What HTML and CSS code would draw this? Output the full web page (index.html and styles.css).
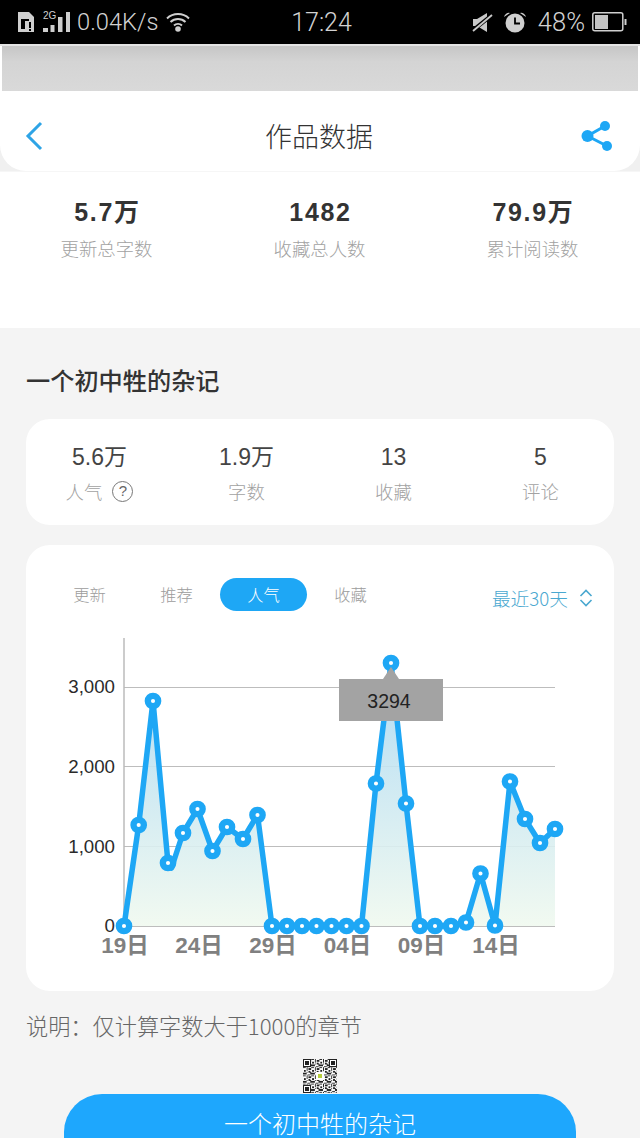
FILE: index.html
```html
<!DOCTYPE html>
<html lang="zh">
<head>
<meta charset="utf-8">
<title>作品数据</title>
<link rel="stylesheet" href="styles.css">
</head>
<body>
<div class="status">
  <div class="st-left">
    <svg class="ic-sim" viewBox="0 0 18 21"><path d="M1 0h11l5 5v15H1z" fill="#cfcfcf"/><path d="M4 7h8v10H4z" fill="#000"/><path d="M8 9h9v11H8z" fill="#cfcfcf"/><path d="M12 10h2v6h-2zM12 17h2v2h-2z" fill="#000"/></svg>
    <svg class="ic-sig" viewBox="0 0 28 22"><text x="0" y="8" class="g2">2G</text><rect x="0" y="17" width="5" height="4" fill="#cfcfcf"/><rect x="7.500" y="14" width="4" height="7" fill="#cfcfcf"/><rect x="15" y="6" width="4.500" height="15" fill="#cfcfcf"/><rect x="23" y="1" width="4" height="20" fill="#cfcfcf"/></svg>
    <span class="speed">0.04K/s</span>
    <svg class="ic-wifi" viewBox="0 0 24 20"><g fill="none" stroke="#cfcfcf" stroke-width="2"><path d="M1 6.500a16 16 0 0 1 22 0"/><path d="M4.500 10a11 11 0 0 1 15 0"/><path d="M8 13.500a6 6 0 0 1 8 0"/></g><circle cx="12" cy="17" r="2.800" fill="#cfcfcf"/></svg>
  </div>
  <div class="st-time">17:24</div>
  <div class="st-right">
    <svg class="ic-mute" viewBox="0 0 21 19"><path d="M1 6h4l10-6v19L5 13H1z" fill="#c8c8c8"/><path d="M0 18L20 2" stroke="#000" stroke-width="4"/><path d="M1 18L20 2" stroke="#c8c8c8" stroke-width="1.800"/></svg>
    <svg class="ic-alarm" viewBox="0 0 24 22"><circle cx="12" cy="12" r="9.500" fill="#cfcfcf"/><path d="M12 6.500V12.500H17" fill="none" stroke="#000" stroke-width="1.800"/><path d="M1 6a5 5 0 0 1 6-4zM23 6a5 5 0 0 0-6-4z" fill="#cfcfcf"/></svg>
    <span class="batt-txt">48%</span>
    <svg class="ic-batt" viewBox="0 0 35 20"><rect x="0.800" y="0.800" width="30" height="18" rx="2" fill="none" stroke="#cfcfcf" stroke-width="1.500"/><rect x="3" y="3" width="13" height="14" fill="#c4c4c4"/><rect x="32.500" y="7" width="2" height="6" fill="#cfcfcf"/></svg>
  </div>
</div>
<div class="band-wrap"><div class="band"></div></div>
<div class="nav-wrap">
  <header class="nav">
    <svg class="back" viewBox="0 0 18 30"><path d="M16 2L3 15l13 13" fill="none" stroke="#2ea4e6" stroke-width="3"/></svg>
    <h1 class="nav-title">作品数据</h1>
    <svg class="share" viewBox="0 0 32 32"><g fill="#1ea7f5"><circle cx="6.500" cy="16" r="6"/><circle cx="24" cy="6" r="5"/><circle cx="26" cy="26" r="5"/></g><path d="M24 6L6.500 16 26 26" fill="none" stroke="#1ea7f5" stroke-width="3"/></svg>
  </header>
</div>
<section class="totals">
  <div class="total"><div class="total-v">5.7万</div><div class="total-l">更新总字数</div></div>
  <div class="total"><div class="total-v">1482</div><div class="total-l">收藏总人数</div></div>
  <div class="total"><div class="total-v">79.9万</div><div class="total-l">累计阅读数</div></div>
</section>
<main class="main">
  <h2 class="work">一个初中牲的杂记</h2>
  <section class="card summary">
    <div class="sum"><div class="sum-v">5.6万</div><div class="sum-l">人气<span class="q">?</span></div></div>
    <div class="sum"><div class="sum-v">1.9万</div><div class="sum-l">字数</div></div>
    <div class="sum"><div class="sum-v">13</div><div class="sum-l">收藏</div></div>
    <div class="sum"><div class="sum-v">5</div><div class="sum-l">评论</div></div>
  </section>
  <section class="card chart-card">
    <div class="chart-head">
      <div class="tabs">
        <span class="tab">更新</span><span class="tab">推荐</span><span class="tab active">人气</span><span class="tab">收藏</span>
      </div>
      <div class="range">最近30天<svg class="updown" viewBox="0 0 14 18"><path d="M1.500 7L7 1.500 12.500 7M1.500 11L7 16.500 12.500 11" fill="none" stroke="#4aa8d0" stroke-width="1.600"/></svg></div>
    </div>
    <div class="chart">
      <svg class="plot" viewBox="26 625 588 366">
        <defs>
          <linearGradient id="area" x1="0" y1="663" x2="0" y2="926" gradientUnits="userSpaceOnUse">
            <stop offset="0" stop-color="#a9d8f3"/>
            <stop offset="1" stop-color="#f0f9ef"/>
          </linearGradient>
        </defs>
        <g class="grid">
          <path d="M124 687.500H555M124 766.500H555M124 846.500H555M124 926.500H555"/>
        </g>
        <path class="axis" d="M124 638V926"/>
        <path fill="url(#area)" opacity="0.9" d="M124 926L138.700 825 153 701 168 863 171.500 868 183 833 197.500 809 212.500 851 227 827 243 839 257.500 815 272 926 361.500 926 376 783.500 391 663 406 803.500 420 926 451 926 466 922.500 480.500 873.500 495 925.500 510 781.500 525 819 540 843 555 829V926z"/>
        <path class="line" d="M124 926L138.700 825 153 701 168 863 171.500 868 183 833 197.500 809 212.500 851 227 827 243 839 257.500 815 272 926H361.500L376 783.500 391 663 406 803.500 420 926H451L466 922.500 480.500 873.500 495 925.500 510 781.500 525 819 540 843 555 829"/>
        <g class="dots">
          <circle cx="124" cy="926" r="5.200"/><circle cx="138.700" cy="825" r="5.200"/><circle cx="153" cy="701" r="5.200"/><circle cx="168" cy="863" r="5.200"/><circle cx="183" cy="833" r="5.200"/><circle cx="197.500" cy="809" r="5.200"/><circle cx="212.500" cy="851" r="5.200"/><circle cx="227" cy="827" r="5.200"/><circle cx="243" cy="839" r="5.200"/><circle cx="257.500" cy="815" r="5.200"/><circle cx="272" cy="926" r="5.200"/><circle cx="287" cy="926" r="5.200"/><circle cx="302" cy="926" r="5.200"/><circle cx="316.500" cy="926" r="5.200"/><circle cx="331.500" cy="926" r="5.200"/><circle cx="346.500" cy="926" r="5.200"/><circle cx="361.500" cy="926" r="5.200"/><circle cx="376" cy="783.500" r="5.200"/><circle cx="391" cy="663" r="5.200"/><circle cx="406" cy="803.500" r="5.200"/><circle cx="420" cy="926" r="5.200"/><circle cx="435" cy="926" r="5.200"/><circle cx="451" cy="926" r="5.200"/><circle cx="466" cy="922.500" r="5.200"/><circle cx="480.500" cy="873.500" r="5.200"/><circle cx="495" cy="925.500" r="5.200"/><circle cx="510" cy="781.500" r="5.200"/><circle cx="525" cy="819" r="5.200"/><circle cx="540" cy="843" r="5.200"/><circle cx="555" cy="829" r="5.200"/>
        </g>
        <g class="ylab">
          <text x="115" y="693">3,000</text><text x="115" y="773">2,000</text><text x="115" y="852.500">1,000</text><text x="115" y="932">0</text>
        </g>
        <g class="xlab">
          <text x="125" y="953">19日</text><text x="199" y="953">24日</text><text x="273" y="953">29日</text><text x="347.500" y="953">04日</text><text x="421.500" y="953">09日</text><text x="496" y="953">14日</text>
        </g>
      </svg>
      <div class="tip"><span class="tip-arrow"></span>3294</div>
    </div>
  </section>
  <p class="note">说明：仅计算字数大于1000的章节</p>
  <div class="qr-row">
    <svg class="qr" viewBox="0 0 29 29" shape-rendering="crispEdges">
      <rect width="29" height="29" fill="#fff"/>
      <defs><pattern id="mods" width="7" height="7" patternUnits="userSpaceOnUse"><path d="M0 0h2v1H0zM3 0h1v3H3zM5 1h2v1H5zM1 2h1v2H1zM5 3h1v2H5zM0 5h3v1H0zM3 4h1v1H3zM4 6h2v1H4zM6 4h1v2H6z" fill="#222"/></pattern></defs>
      <rect width="29" height="29" fill="url(#mods)"/>
      <g fill="#222">
        <path d="M0 0h7v7H0zM22 0h7v7h-7zM0 22h7v7H0z"/>
      </g>
      <g fill="#fff"><path d="M1 1h5v5H1zM23 1h5v5h-5zM1 23h5v5H1z"/></g>
      <g fill="#222"><path d="M2 2h3v3H2zM24 2h3v3h-3zM2 24h3v3H2z"/></g>
      <rect x="11" y="11" width="7" height="7" fill="#fff"/>
      <rect x="12.500" y="12.500" width="4" height="4" fill="#b8cf3c"/>
    </svg>
  </div>
  <button class="cta">一个初中牲的杂记</button>
</main>
</body>
</html>
```
FILE: styles.css
```css
* { box-sizing: border-box; }
html, body { margin: 0; padding: 0; height: 1138px; overflow: hidden; }
body { width: 640px; background: #f4f4f4; font-family: "Liberation Sans", "Noto Sans CJK SC", sans-serif; color: #333; }

.status { height: 44px; background: #000; display: grid; grid-template-columns: 1fr auto 1fr; align-items: center; padding: 0 14px 0 17px; color: #d2d2d2; font-family: Roboto, "Liberation Sans", sans-serif; font-weight: 300; font-size: 23.700px; }
.st-time { font-size: 25px; }
.batt-txt { font-size: 25.500px; }
.st-left, .st-right { display: flex; align-items: center; }
.st-right { justify-content: flex-end; }
.ic-sim { width: 18px; height: 21px; margin-right: 8px; }
.ic-sig { width: 28px; height: 22px; margin-right: 6px; }
.g2 { font-size: 10px; fill: #cfcfcf; font-family: "Liberation Sans", sans-serif; }
.ic-wifi { width: 24px; height: 20px; margin-left: 8px; }
.ic-mute { width: 21px; height: 19px; margin-right: 10px; }
.ic-alarm { width: 24px; height: 22px; margin-right: 11px; }
.ic-batt { width: 35px; height: 20px; margin-left: 7px; margin-right: -1px; }

.band-wrap { background: #fff; border-top: 2px solid #e4e4e4; padding: 0 2px; }
.band { height: 45px; background: linear-gradient(#c6c6c6, #d4d4d4 35%, #d9d9d9); }

.nav-wrap { background: #f0f0f0; height: 81px; border-bottom: 1px solid #f6f6f6; }
.nav { height: 80px; background: #fff; border-radius: 0 0 26px 26px; display: grid; grid-template-columns: 1fr auto 1fr; align-items: center; padding: 10px 27px 0 25px; }
.back { width: 18px; height: 30px; }
.nav-title { margin: 0; font-family: "Noto Sans CJK SC", sans-serif; font-weight: 300; font-size: 27px; line-height: 36px; color: #333; }
.share { width: 32px; height: 32px; justify-self: end; }

.totals { height: 156px; background: #fff; display: grid; grid-template-columns: repeat(3, 213px); padding-top: 24px; text-align: center; }
.total-v { font-size: 25px; font-weight: 700; letter-spacing: 1.700px; padding-left: 2px; line-height: 32px; color: #333; }
.total-l { font-family: "Noto Sans CJK SC", sans-serif; font-size: 18.400px; font-weight: 300; line-height: 26px; margin-top: 7px; color: #a2a2a2; }

.main { padding: 0 26px; }
.work { margin: 0; padding-top: 35px; height: 91px; font-family: "Noto Sans CJK SC", sans-serif; font-size: 24.200px; font-weight: 500; line-height: 34px; color: #333; }
.card { background: #fff; border-radius: 24px; }
.summary { height: 106px; display: grid; grid-template-columns: repeat(4, 147px); text-align: center; padding-top: 23px; }
.sum-v { font-size: 23px; line-height: 30px; color: #444; }
.sum-l { font-family: "Noto Sans CJK SC", sans-serif; font-size: 18.400px; font-weight: 300; line-height: 26px; margin-top: 6px; color: #a2a2a2; display: flex; align-items: center; justify-content: center; }
.q { width: 21px; height: 21px; border: 1.500px solid #777; border-radius: 50%; margin-left: 10px; margin-right: -43px; font-size: 15px; line-height: 18px; color: #666; font-family: "Liberation Sans", sans-serif; }
.summary .sum:first-child .sum-l { padding-right: 43px; }

.chart-card { margin-top: 20px; height: 446px; }
.chart-head { height: 80px; display: flex; justify-content: space-between; padding: 33px 21px 0 20px; }
.tabs { display: flex; height: 33px; }
.tab { width: 87px; border-radius: 17px; text-align: center; font-family: "Noto Sans CJK SC", sans-serif; font-size: 16.300px; font-weight: 300; line-height: 33px; color: #9c9c9c; }
.tab.active { background: #1ea7f5; color: #fff; }
.range { display: flex; align-items: center; height: 44px; margin-top: -2px; font-family: "Noto Sans CJK SC", sans-serif; font-size: 18.700px; font-weight: 300; color: #4aa8d0; line-height: 44px; }
.updown { width: 14px; height: 18px; margin-left: 11px; }

.chart { position: relative; height: 366px; }
.plot { display: block; width: 588px; height: 366px; }
.grid path { stroke: #bdbdbd; stroke-width: 1; fill: none; }
.axis { stroke: #bbb; stroke-width: 1.500; fill: none; }
.line { fill: none; stroke: #1ea7f5; stroke-width: 5.500; stroke-linejoin: round; }
.dots circle { fill: #fff; stroke: #1ea7f5; stroke-width: 6.300; }
.ylab text { font-family: "Liberation Sans", sans-serif; font-size: 18.700px; fill: #2a2a2a; text-anchor: end; }
.xlab text { font-family: "Liberation Sans", "Noto Sans CJK SC", sans-serif; font-size: 22.500px; font-weight: 700; fill: #808080; text-anchor: middle; }
.tip { position: absolute; left: 313px; top: 54px; width: 104px; height: 42px; background: #a3a3a3; color: #222; font-size: 19.500px; line-height: 44px; text-align: center; padding-right: 4px; }
.tip-arrow { position: absolute; left: 44px; top: -12px; width: 0; height: 0; border-left: 8px solid transparent; border-right: 8px solid transparent; border-bottom: 12px solid #a3a3a3; }

.note { margin: 0; padding-top: 19px; height: 68px; font-family: "Noto Sans CJK SC", sans-serif; font-size: 22.200px; font-weight: 300; line-height: 30px; color: #666; }
.qr-row { display: flex; justify-content: center; height: 35px; }
.qr { width: 34px; height: 34px; }
.cta { display: block; width: 512px; height: 44px; margin: 0 38px; border: 0; border-radius: 38px 38px 0 0; background: #1ea7fd; color: #fff; font-family: "Noto Sans CJK SC", sans-serif; font-size: 24px; line-height: 30px; font-weight: 300; padding: 13px 0 0; }
```
